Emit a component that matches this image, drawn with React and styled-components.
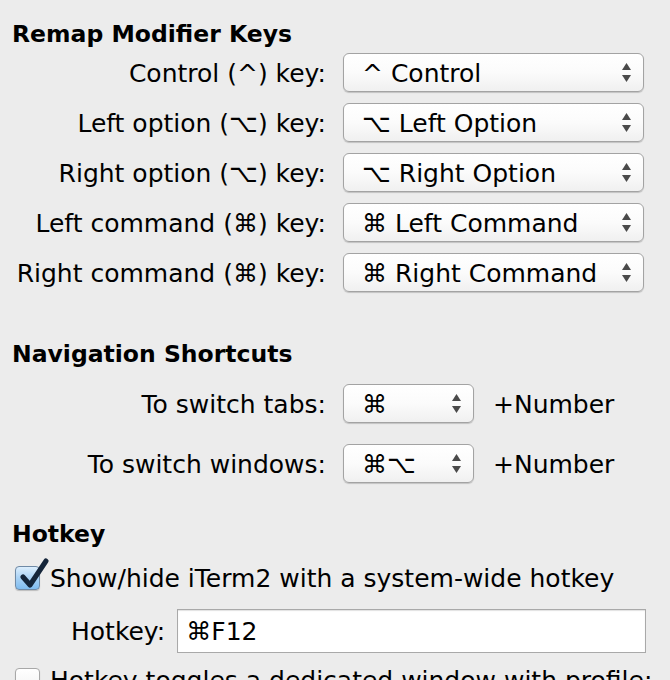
import styled, { createGlobalStyle } from 'styled-components';

const GlobalStyle = createGlobalStyle`
    body {
        margin: 0;
        background: #ececec;
        font-family: "DejaVu Sans", "Liberation Sans", sans-serif;
        color: #000;
    }
`;

const remapRows = [
    { label: "Control (^) key:", value: "^ Control" },
    { label: "Left option (⌥) key:", value: "⌥ Left Option" },
    { label: "Right option (⌥) key:", value: "⌥ Right Option" },
    { label: "Left command (⌘) key:", value: "⌘ Left Command" },
    { label: "Right command (⌘) key:", value: "⌘ Right Command" },
];

const navRows = [
    { label: "To switch tabs:", value: "⌘" },
    { label: "To switch windows:", value: "⌘⌥" },
];

const Arrows = () => (
    <ArrowBox>
        <svg width="9" height="20" viewBox="0 0 9 20">
            <path d="M4.5 0 L9 7 L0 7 Z" fill="#4a4a4a" />
            <path d="M0 12 L9 12 L4.5 19 Z" fill="#4a4a4a" />
        </svg>
    </ArrowBox>
);

const Check = () => (
    <svg width="34" height="36" viewBox="0 0 34 36" style={{ position: "absolute", left: 2, top: -9 }}>
        <path d="M5 19 L12 27 L28 3" fill="none" stroke="#14253a" strokeWidth="5" strokeLinecap="round" strokeLinejoin="round" />
    </svg>
);

const App = () => {
    return (
        <Page>
            <GlobalStyle />
            <Heading>Remap Modifier Keys</Heading>
            <FormGrid $gap={11}>
                {remapRows.map((row) => (
                    <Row key={row.label}>
                        <Label>{row.label}</Label>
                        <Popup $width={301}>
                            <PopupText>{row.value}</PopupText>
                            <Arrows />
                        </Popup>
                    </Row>
                ))}
            </FormGrid>

            <Heading $top={47}>Navigation Shortcuts</Heading>
            <FormGrid $gap={21} $top={15}>
                {navRows.map((row) => (
                    <Row key={row.label}>
                        <Label>{row.label}</Label>
                        <Popup $width={131}>
                            <PopupText>{row.value}</PopupText>
                            <Arrows />
                        </Popup>
                        <Suffix>+Number</Suffix>
                    </Row>
                ))}
            </FormGrid>

            <Heading $top={36}>Hotkey</Heading>
            <CheckRow $top={14}>
                <CheckBox $checked>
                    <Check />
                </CheckBox>
                <CheckLabel>Show/hide iTerm2 with a system-wide hotkey</CheckLabel>
            </CheckRow>
            <FieldRow>
                <FieldLabel>Hotkey:</FieldLabel>
                <TextField>⌘F12</TextField>
            </FieldRow>
            <CheckRow $top={12}>
                <CheckBox />
                <CheckLabel>Hotkey toggles a dedicated window with profile:</CheckLabel>
            </CheckRow>
        </Page>
    );
};

const Page = styled.div`
    width: 670px;
    height: 680px;
    overflow: hidden;
    padding-top: 19px;
    box-sizing: border-box;
`;

const Heading = styled.h3`
    margin: ${(p) => p.$top || 0}px 0 0 12px;
    font-size: 23.5px;
    font-weight: bold;
    line-height: 30px;
`;

const FormGrid = styled.div`
    display: flex;
    flex-direction: column;
    gap: ${(p) => p.$gap}px;
    margin-top: ${(p) => p.$top || 4}px;
`;

const Row = styled.div`
    display: flex;
    align-items: center;
    height: 39px;
`;

const Label = styled.div`
    width: 326px;
    text-align: right;
    font-size: 25px;
    white-space: nowrap;
    margin-right: 17px;
    padding-top: 2px;
`;

const Popup = styled.div`
    width: ${(p) => p.$width}px;
    height: 39px;
    box-sizing: border-box;
    display: flex;
    align-items: center;
    justify-content: space-between;
    padding: 0 12px 0 18px;
    border: 1px solid #a3a3a3;
    border-radius: 6px;
    background: linear-gradient(#ffffff, #fbfbfb 50%, #f0f0f0);
    box-shadow: 0 1px 1px rgba(0, 0, 0, 0.18);
`;

const PopupText = styled.span`
    font-size: 25px;
    white-space: nowrap;
    padding-top: 2px;
`;

const ArrowBox = styled.span`
    display: flex;
    align-items: center;
`;

const Suffix = styled.span`
    margin-left: 19px;
    font-size: 25px;
    padding-top: 2px;
`;

const CheckRow = styled.div`
    display: flex;
    align-items: center;
    height: 30px;
    margin-top: ${(p) => p.$top}px;
    padding-left: 15px;
`;

const CheckBox = styled.span`
    position: relative;
    flex-shrink: 0;
    width: 25px;
    height: 24px;
    box-sizing: border-box;
    border-radius: 4px;
    border: 1px solid ${(p) => (p.$checked ? "#6f8aa6" : "#a8a8a8")};
    background: ${(p) =>
        p.$checked
            ? "linear-gradient(#dceefd, #a9d2f5 50%, #7fbcef)"
            : "linear-gradient(#ffffff, #f2f2f2)"};
    box-shadow: 0 1px 1px rgba(0, 0, 0, 0.2);
    margin-right: 10px;
`;

const CheckLabel = styled.span`
    font-size: 25px;
    white-space: nowrap;
`;

const FieldRow = styled.div`
    display: flex;
    align-items: center;
    margin-top: 16px;
    padding-left: 71px;
`;

const FieldLabel = styled.span`
    font-size: 25px;
    margin-right: 12px;
`;

const TextField = styled.div`
    width: 469px;
    height: 44px;
    box-sizing: border-box;
    display: flex;
    align-items: center;
    padding-left: 8px;
    font-size: 25px;
    background: #fff;
    border: 1px solid #a9a9a9;
    box-shadow: inset 0 1px 1px rgba(0, 0, 0, 0.12);
`;

export default App;
